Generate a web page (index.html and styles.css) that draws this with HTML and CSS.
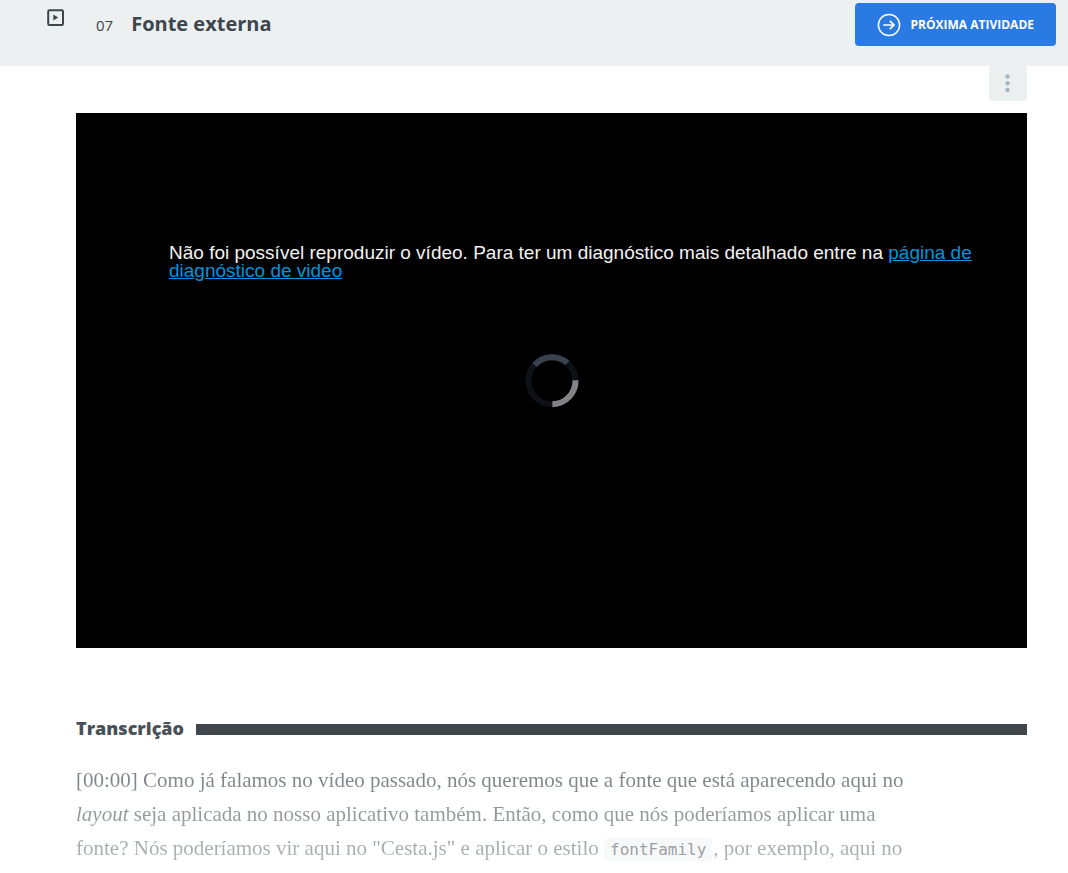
FILE: index.html
```html
<!DOCTYPE html>
<html lang="pt-BR">
<head>
<meta charset="utf-8">
<meta name="viewport" content="width=device-width, initial-scale=1">
<title>Fonte externa</title>
<link rel="stylesheet" href="styles.css">
</head>
<body>
<header class="header">
  <svg class="header-icon" viewBox="0 0 18 18" aria-hidden="true">
    <rect x="1.2" y="1.2" width="14.8" height="14.8" rx="1.2" fill="none" stroke="currentColor" stroke-width="2"/>
    <path d="M6.3 5.6 11.3 8.6 6.3 11.6Z" fill="currentColor"/>
  </svg>
  <h1 class="title"><span class="number">07</span><span>Fonte externa</span></h1>
  <a class="next" href="#">
    <svg class="next-icon" viewBox="0 0 24 24" fill="none" stroke="currentColor" aria-hidden="true">
      <circle cx="12" cy="12" r="10.6" stroke-width="1.5"/>
      <path d="M6.3 12H17M12.8 7.8 17 12l-4.2 4.2" stroke-width="1.7"/>
    </svg>
    <span>PRÓXIMA ATIVIDADE</span>
  </a>
</header>
<main class="main">
  <div class="toolbar">
    <button class="menu" type="button" aria-label="Opções">
      <svg class="menu-icon" viewBox="0 0 6 20" fill="currentColor" aria-hidden="true">
        <circle cx="2.5" cy="2.5" r="2.2"/><circle cx="2.5" cy="9.3" r="2.2"/><circle cx="2.5" cy="16" r="2.2"/>
      </svg>
    </button>
  </div>
  <section class="video">
    <p class="error">Não foi possível reproduzir o vídeo. Para ter um diagnóstico mais detalhado entre na <a class="error-link" href="#">página de diagnóstico de video</a></p>
    <svg class="spinner" viewBox="0 0 54 54" fill="none" stroke-width="6" aria-hidden="true">
      <circle cx="27" cy="27.7" r="23.5" stroke="#0e1216"/>
      <path d="M9.6 11.9A23.5 23.5 0 0 1 42.4 10" stroke="#39424f"/>
      <path d="M50.5 27.2A23.5 23.5 0 0 1 27.4 51.2" stroke="#828386"/>
    </svg>
  </section>
  <section class="transcript">
    <h2 class="heading">Transcrição</h2>
    <p class="text">[00:00] Como já falamos no vídeo passado, nós queremos que a fonte que está aparecendo aqui no<br><em>layout</em> seja aplicada no nosso aplicativo também. Então, como que nós poderíamos aplicar uma<br>fonte? Nós poderíamos vir aqui no "Cesta.js" e aplicar o estilo <code class="code">fontFamily</code>, por exemplo, aqui no<br><code class="code">&nbsp;&nbsp;&nbsp;&nbsp;</code></p>
  </section>
</main>
</body>
</html>
```

FILE: styles.css
```css
* {
  box-sizing: border-box;
}

body {
  margin: 0;
  height: 100vh;
  overflow: hidden;
  background: #fff;
  color: #3d464d;
  font-family: "Open Sans", sans-serif;
}

.header {
  display: flex;
  align-items: flex-start;
  min-height: 66px;
  padding: 3px 12px 0 47px;
  background: #ecf0f1;
}

.header-icon {
  flex: none;
  width: 18px;
  height: 18px;
  margin-top: 6px;
}

.title {
  display: flex;
  flex: 1;
  align-items: baseline;
  gap: 18px;
  margin: 0;
  padding-left: 31px;
  font-size: 20px;
  font-weight: 700;
  line-height: 42px;
}

.number {
  font-size: 15px;
  font-weight: 500;
}

.next {
  display: flex;
  align-items: center;
  gap: 10px;
  min-height: 43px;
  padding: 0 22px;
  border-radius: 4px;
  background: #2a7ae4;
  color: #fff;
  font-size: 12px;
  font-weight: 700;
  line-height: 18px;
  text-decoration: none;
  white-space: nowrap;
}

.next-icon {
  flex: none;
  width: 24px;
  height: 24px;
}

.main {
  padding: 0 41px 0 76px;
}

.toolbar {
  display: flex;
  justify-content: flex-end;
  margin-bottom: 12px;
}

.menu {
  display: grid;
  place-items: center;
  width: 38px;
  height: 35px;
  padding: 0;
  border: 0;
  border-radius: 0 0 3px 3px;
  background: #ecf0f1;
  color: #a4b7c1;
}

.menu-icon {
  width: 6px;
  height: 20px;
}

.video {
  position: relative;
  aspect-ratio: 16 / 9;
  padding: 131px 0 0 93px;
  background: #000;
}

.error {
  max-width: 820px;
  margin: 0;
  color: #f2f2f2;
  font-family: "Liberation Sans", Arial, sans-serif;
  font-size: 19px;
  line-height: 18px;
}

.error-link {
  color: #0095dd;
}

.spinner {
  position: absolute;
  top: 50%;
  left: 50%;
  width: 54px;
  height: 54px;
  overflow: visible;
  transform: translate(-50%, -50%);
}

.transcript {
  padding-top: 64px;
}

.heading {
  display: flex;
  align-items: center;
  gap: 12px;
  margin: 0;
  color: #495157;
  font-size: 18px;
  font-weight: 800;
  line-height: 32px;
}

.heading::after {
  content: "";
  flex: 1;
  height: 11px;
  margin-top: 4px;
  background: #42474b;
}

.text {
  margin: 19px 0 0;
  background: linear-gradient(#7b8185 10px, #aaaeb1 88px, #d0d2d4 120px);
  background-clip: text;
  color: transparent;
  font-family: "Source Serif Pro", "Liberation Serif", serif;
  font-size: 21px;
  line-height: 34px;
  white-space: nowrap;
}

.code {
  margin: 0 1px 0 0;
  padding: 2px 6px;
  border-radius: 4px;
  background: #f7f8f9;
  color: #9b9fa3;
  font-family: "DejaVu Sans Mono", monospace;
  font-size: 16px;
}
```
